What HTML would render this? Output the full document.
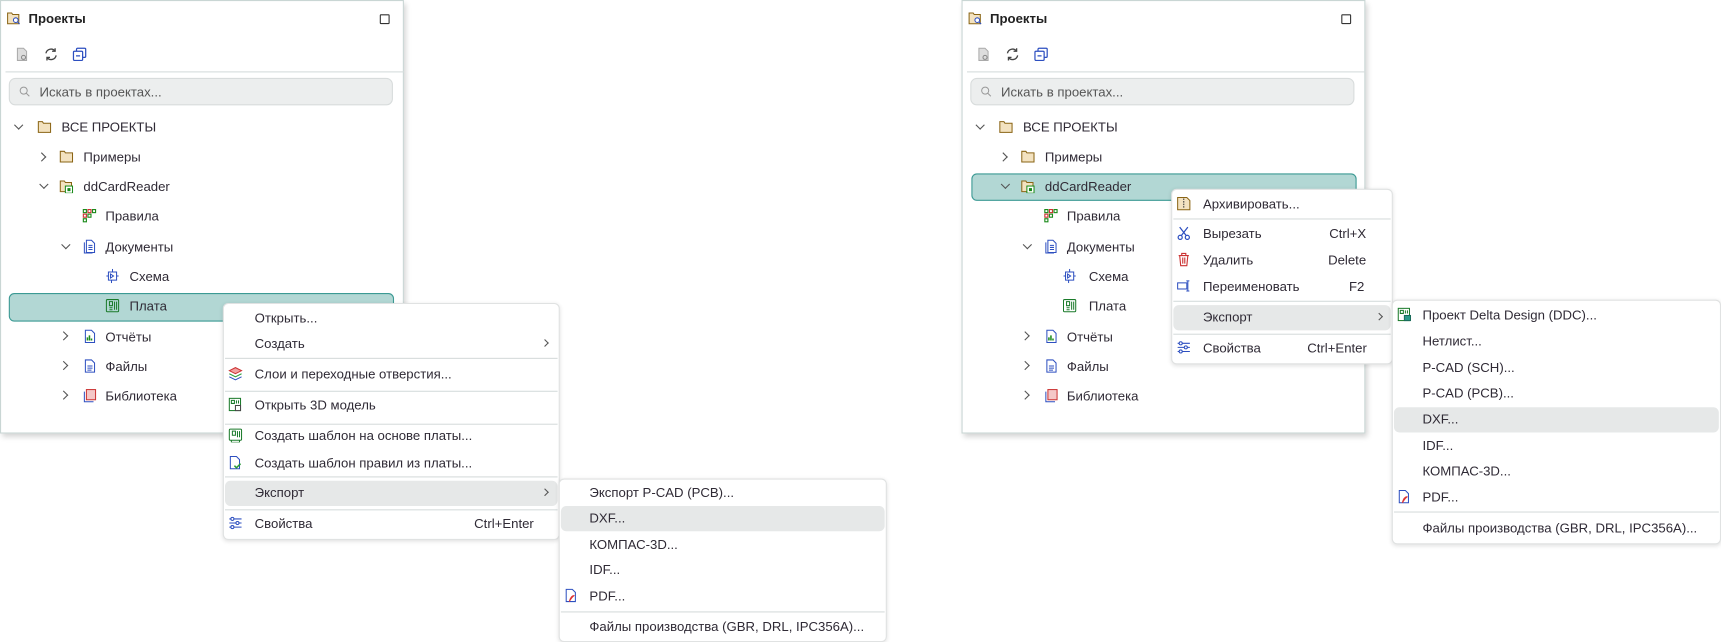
<!DOCTYPE html>
<html><head><meta charset="utf-8"><style>
*{box-sizing:border-box;margin:0;padding:0}
body{width:1721px;height:642px;background:#fff;position:relative;overflow:hidden;font-family:"Liberation Sans","DejaVu Sans",sans-serif;font-size:12px;color:#2f2a35}
#w{position:absolute;left:0;top:0;width:1568px;height:585px;transform:scale(1.0976);transform-origin:0 0}
.a{position:absolute;white-space:nowrap}
.panel{position:absolute;width:368px;height:395px;background:#fff;border:1px solid #c9d6d4;box-shadow:2px 3px 5px rgba(0,0,0,.18)}
.title{font-weight:bold;font-size:12px;color:#222}
.sq{width:9px;height:9px;border:1.3px solid #333;border-radius:1px}
.hr{position:absolute;height:1px;background:#d6dcdc}
.search{position:absolute;left:8px;top:71px;width:350px;height:25px;background:#eceeee;border:1px solid #d8dcdc;border-radius:6px}
.search span{position:absolute;left:27px;top:5px;color:#555}
.sel{position:absolute;background:#b2d7d4;border:1px solid #3c9a94;border-radius:5px}
.menu{position:absolute;background:#fff;border:1px solid #e0e2e2;border-radius:5px;box-shadow:0 1px 4px rgba(0,0,0,.12)}
.hl{position:absolute;background:#e6e8e8;border-radius:5px}
.chev{position:absolute;width:6px;height:6px;border-right:1.2px solid #555;border-bottom:1.2px solid #555}
.cr{transform:rotate(-45deg)}
.cd{transform:rotate(45deg)}
.ic{position:absolute;width:13px;height:13px}
</style></head><body><div id="w">

<!-- LEFT PANEL -->
<div class="panel" style="left:0;top:0"></div>
<svg class="ic" style="left:6px;top:10px" viewBox="0 0 14 14"><path d="M1 2h4l1 1.5h6v9H1z" fill="#f3e2c0" stroke="#8a6414"/><circle cx="9" cy="9" r="2.3" fill="#fff" stroke="#2d4fc0"/><path d="M10.6 10.6l2.2 2.2" stroke="#2d4fc0"/></svg>
<div class="a title" style="left:26px;top:10px">Проекты</div>
<div class="a sq" style="left:346px;top:13px"></div>
<svg class="ic" style="left:14px;top:43px" viewBox="0 0 14 14"><path d="M2 1h6l3 3v9H2z" fill="#ddd" stroke="#aaa"/><circle cx="8" cy="10" r="2" fill="none" stroke="#888"/></svg>
<svg class="ic" style="left:40px;top:43px" viewBox="0 0 14 14" fill="none" stroke="#444" stroke-width="1.3"><path d="M2 6a5 5 0 0 1 9-2M12 8a5 5 0 0 1-9 2"/><path d="M11 1v3h-3M3 13v-3h3"/></svg>
<svg class="ic" style="left:66px;top:43px" viewBox="0 0 14 14" fill="none" stroke="#2d4fc0" stroke-width="1.2"><rect x="4" y="1" width="9" height="9" rx="1"/><rect x="1" y="4" width="9" height="9" rx="1" fill="#fff"/><path d="M3.5 8.5h4"/></svg>
<div class="hr" style="left:5px;top:65px;width:363px"></div>
<div class="search"><svg class="ic" style="left:8px;top:6px;width:11px;height:11px" viewBox="0 0 12 12" fill="none" stroke="#999"><circle cx="5" cy="5" r="3.5"/><path d="M7.6 7.6l3 3"/></svg><span>Искать в проектах...</span></div>

<div class="chev cd" style="left:14px;top:111px"></div>
<svg class="ic" style="left:34px;top:109px" viewBox="0 0 14 14"><path d="M1 2h4l1 1.5h7v9H1z" fill="#f3e2c0" stroke="#8a6414"/></svg>
<div class="a" style="left:56px;top:109px">ВСЕ ПРОЕКТЫ</div>
<div class="chev cr" style="left:35px;top:140px"></div>
<svg class="ic" style="left:54px;top:136px" viewBox="0 0 14 14"><path d="M1 2h4l1 1.5h7v9H1z" fill="#f3e2c0" stroke="#8a6414"/></svg>
<div class="a" style="left:76px;top:136px">Примеры</div>
<div class="chev cd" style="left:37px;top:165px"></div>
<svg class="ic" style="left:54px;top:163px" viewBox="0 0 14 14"><path d="M1 2h4l1 1.5h6v9H1z" fill="#f3e2c0" stroke="#8a6414"/><rect x="6" y="7" width="7" height="7" fill="#fff" stroke="#1a8a1a"/><rect x="8" y="9" width="3" height="3" fill="#1a8a1a"/></svg>
<div class="a" style="left:76px;top:163px">ddCardReader</div>
<svg class="ic" style="left:75px;top:190px" viewBox="0 0 14 14" fill="none" stroke-width="1.1"><rect x="1" y="1" width="3" height="3" stroke="#1a8a1a"/><rect x="5.5" y="1" width="3" height="3" stroke="#c33"/><rect x="10" y="1" width="3" height="3" stroke="#1a8a1a"/><rect x="1" y="5.5" width="3" height="3" stroke="#c33"/><rect x="5.5" y="5.5" width="3" height="3" stroke="#1a8a1a"/><rect x="1" y="10" width="3" height="3" stroke="#1a8a1a"/></svg>
<div class="a" style="left:96px;top:190px">Правила</div>
<div class="chev cd" style="left:57px;top:220px"></div>
<svg class="ic" style="left:75px;top:218px" viewBox="0 0 14 14" fill="none" stroke="#2d4fc0"><path d="M4 1h5l3 3v9H4z"/><path d="M2 3v10.5h8"/><path d="M6 6h4M6 8h4M6 10h4"/></svg>
<div class="a" style="left:96px;top:218px">Документы</div>
<svg class="ic" style="left:96px;top:245px" viewBox="0 0 14 14" fill="none" stroke="#2d4fc0"><path d="M3 3h8v8H3z"/><path d="M7 0v3M1 7h2M11 7h2M6 11v3M5 5l3 2-3 2z"/></svg>
<div class="a" style="left:118px;top:245px">Схема</div>
<div class="sel" style="left:8px;top:267px;width:351px;height:26px"></div>
<svg class="ic" style="left:96px;top:272px" viewBox="0 0 14 14" fill="none" stroke="#1a7a2a"><rect x="1" y="1" width="12" height="12" rx="1"/><path d="M4 3v4h3V3zM9 3v8M11 3v8M4 9h3M4 11h3"/></svg>
<div class="a" style="left:118px;top:272px">Плата</div>
<div class="chev cr" style="left:55px;top:303px"></div>
<svg class="ic" style="left:75px;top:300px" viewBox="0 0 14 14"><path d="M3 1h6l3 3v9H3z" fill="none" stroke="#2d4fc0"/><path d="M5 11V8M7 11V6M9 11V9" stroke="#1a8a1a" stroke-width="1.5"/></svg>
<div class="a" style="left:96px;top:300px">Отчёты</div>
<div class="chev cr" style="left:55px;top:330px"></div>
<svg class="ic" style="left:75px;top:327px" viewBox="0 0 14 14" fill="none" stroke="#2d4fc0"><path d="M3 1h6l3 3v9H3z"/><path d="M5 7h5M5 9h5M5 11h4"/></svg>
<div class="a" style="left:96px;top:327px">Файлы</div>
<div class="chev cr" style="left:55px;top:357px"></div>
<svg class="ic" style="left:75px;top:354px" viewBox="0 0 14 14"><rect x="4" y="1" width="9" height="10" fill="#f4c7c7" stroke="#c33"/><path d="M2 3v10h9" fill="none" stroke="#2d4fc0"/></svg>
<div class="a" style="left:96px;top:354px">Библиотека</div>

<!-- LEFT MENU -->
<div class="menu" style="left:203px;top:276px;width:307px;height:216px"></div>
<div class="a" style="left:232px;top:283px">Открыть...</div>
<div class="a" style="left:232px;top:306px">Создать</div>
<div class="chev cr" style="left:494px;top:310px;width:5px;height:5px"></div>
<div class="hr" style="left:205px;top:326px;width:303px"></div>
<svg class="ic" style="left:208px;top:334px" viewBox="0 0 14 14"><path d="M1 4l6-3 6 3-6 3z" fill="#f2a0a0" stroke="#c33"/><path d="M1 7l6 3 6-3" fill="none" stroke="#2a9a3a"/><path d="M1 10l6 3 6-3" fill="none" stroke="#2d4fc0"/></svg>
<div class="a" style="left:232px;top:334px">Слои и переходные отверстия...</div>
<div class="hr" style="left:205px;top:356px;width:303px"></div>
<svg class="ic" style="left:208px;top:362px" viewBox="0 0 14 14" fill="none" stroke="#1a7a2a"><rect x="1" y="1" width="11" height="12"/><path d="M3 3h3v3H3zM8 3v3M10 3v3"/><rect x="7" y="8" width="5" height="5" fill="#fff" stroke="#444"/></svg>
<div class="a" style="left:232px;top:362px">Открыть 3D модель</div>
<div class="hr" style="left:205px;top:386px;width:303px"></div>
<svg class="ic" style="left:208px;top:390px" viewBox="0 0 14 14" fill="none" stroke="#1a7a2a"><rect x="1" y="1" width="12" height="11" rx="1"/><path d="M4 3v4h3V3zM9 3v6M11 3v6M3 12v2h8v-2"/></svg>
<div class="a" style="left:232px;top:390px">Создать шаблон на основе платы...</div>
<svg class="ic" style="left:208px;top:415px" viewBox="0 0 14 14" fill="none"><path d="M2 1h6l3 3v9H2z" stroke="#2d4fc0"/><path d="M6 10l2 2 4-4" stroke="#2a9a3a" stroke-width="1.5"/></svg>
<div class="a" style="left:232px;top:415px">Создать шаблон правил из платы...</div>
<div class="hr" style="left:205px;top:434px;width:303px"></div>
<div class="hl" style="left:205px;top:438px;width:303px;height:23px"></div>
<div class="a" style="left:232px;top:442px">Экспорт</div>
<div class="chev cr" style="left:494px;top:446px;width:5px;height:5px"></div>
<div class="hr" style="left:205px;top:464px;width:303px"></div>
<svg class="ic" style="left:208px;top:470px" viewBox="0 0 14 14" fill="none" stroke="#2d4fc0"><path d="M1 3h12M1 7h12M1 11h12"/><circle cx="4" cy="3" r="1.5" fill="#fff"/><circle cx="9" cy="7" r="1.5" fill="#fff"/><circle cx="4" cy="11" r="1.5" fill="#fff"/></svg>
<div class="a" style="left:232px;top:470px">Свойства</div>
<div class="a" style="left:432px;top:470px">Ctrl+Enter</div>

<!-- LEFT SUBMENU -->
<div class="menu" style="left:509px;top:436px;width:299px;height:149px"></div>
<div class="a" style="left:537px;top:442px">Экспорт P-CAD (PCB)...</div>
<div class="hl" style="left:511px;top:461px;width:295px;height:23px"></div>
<div class="a" style="left:537px;top:465px">DXF...</div>
<div class="a" style="left:537px;top:489px">КОМПАС-3D...</div>
<div class="a" style="left:537px;top:512px">IDF...</div>
<svg class="ic" style="left:514px;top:536px" viewBox="0 0 14 14" fill="none"><path d="M2 1h6l3 3v9H2z" stroke="#2d4fc0"/><path d="M5 13c1-4 3-6 5-6-2 1-3 3-5 6z" stroke="#d33"/></svg>
<div class="a" style="left:537px;top:536px">PDF...</div>
<div class="hr" style="left:511px;top:557px;width:295px"></div>
<div class="a" style="left:537px;top:564px">Файлы производства (GBR, DRL, IPC356A)...</div>

<!-- RIGHT PANEL -->
<div class="panel" style="left:876px;top:0"></div>
<svg class="ic" style="left:882px;top:10px" viewBox="0 0 14 14"><path d="M1 2h4l1 1.5h6v9H1z" fill="#f3e2c0" stroke="#8a6414"/><circle cx="9" cy="9" r="2.3" fill="#fff" stroke="#2d4fc0"/><path d="M10.6 10.6l2.2 2.2" stroke="#2d4fc0"/></svg>
<div class="a title" style="left:902px;top:10px">Проекты</div>
<div class="a sq" style="left:1222px;top:13px"></div>
<svg class="ic" style="left:890px;top:43px" viewBox="0 0 14 14"><path d="M2 1h6l3 3v9H2z" fill="#ddd" stroke="#aaa"/><circle cx="8" cy="10" r="2" fill="none" stroke="#888"/></svg>
<svg class="ic" style="left:916px;top:43px" viewBox="0 0 14 14" fill="none" stroke="#444" stroke-width="1.3"><path d="M2 6a5 5 0 0 1 9-2M12 8a5 5 0 0 1-9 2"/><path d="M11 1v3h-3M3 13v-3h3"/></svg>
<svg class="ic" style="left:942px;top:43px" viewBox="0 0 14 14" fill="none" stroke="#2d4fc0" stroke-width="1.2"><rect x="4" y="1" width="9" height="9" rx="1"/><rect x="1" y="4" width="9" height="9" rx="1" fill="#fff"/><path d="M3.5 8.5h4"/></svg>
<div class="hr" style="left:881px;top:65px;width:363px"></div>
<div class="search" style="left:884px"><svg class="ic" style="left:8px;top:6px;width:11px;height:11px" viewBox="0 0 12 12" fill="none" stroke="#999"><circle cx="5" cy="5" r="3.5"/><path d="M7.6 7.6l3 3"/></svg><span>Искать в проектах...</span></div>

<div class="chev cd" style="left:890px;top:111px"></div>
<svg class="ic" style="left:910px;top:109px" viewBox="0 0 14 14"><path d="M1 2h4l1 1.5h7v9H1z" fill="#f3e2c0" stroke="#8a6414"/></svg>
<div class="a" style="left:932px;top:109px">ВСЕ ПРОЕКТЫ</div>
<div class="chev cr" style="left:911px;top:140px"></div>
<svg class="ic" style="left:930px;top:136px" viewBox="0 0 14 14"><path d="M1 2h4l1 1.5h7v9H1z" fill="#f3e2c0" stroke="#8a6414"/></svg>
<div class="a" style="left:952px;top:136px">Примеры</div>
<div class="sel" style="left:885px;top:158px;width:351px;height:25px"></div>
<div class="chev cd" style="left:913px;top:165px"></div>
<svg class="ic" style="left:930px;top:163px" viewBox="0 0 14 14"><path d="M1 2h4l1 1.5h6v9H1z" fill="#f3e2c0" stroke="#8a6414"/><rect x="6" y="7" width="7" height="7" fill="#fff" stroke="#1a8a1a"/><rect x="8" y="9" width="3" height="3" fill="#1a8a1a"/></svg>
<div class="a" style="left:952px;top:163px">ddCardReader</div>
<svg class="ic" style="left:951px;top:190px" viewBox="0 0 14 14" fill="none" stroke-width="1.1"><rect x="1" y="1" width="3" height="3" stroke="#1a8a1a"/><rect x="5.5" y="1" width="3" height="3" stroke="#c33"/><rect x="10" y="1" width="3" height="3" stroke="#1a8a1a"/><rect x="1" y="5.5" width="3" height="3" stroke="#c33"/><rect x="5.5" y="5.5" width="3" height="3" stroke="#1a8a1a"/><rect x="1" y="10" width="3" height="3" stroke="#1a8a1a"/></svg>
<div class="a" style="left:972px;top:190px">Правила</div>
<div class="chev cd" style="left:933px;top:220px"></div>
<svg class="ic" style="left:951px;top:218px" viewBox="0 0 14 14" fill="none" stroke="#2d4fc0"><path d="M4 1h5l3 3v9H4z"/><path d="M2 3v10.5h8"/><path d="M6 6h4M6 8h4M6 10h4"/></svg>
<div class="a" style="left:972px;top:218px">Документы</div>
<svg class="ic" style="left:968px;top:245px" viewBox="0 0 14 14" fill="none" stroke="#2d4fc0"><path d="M3 3h8v8H3z"/><path d="M7 0v3M1 7h2M11 7h2M6 11v3M5 5l3 2-3 2z"/></svg>
<div class="a" style="left:992px;top:245px">Схема</div>
<svg class="ic" style="left:968px;top:272px" viewBox="0 0 14 14" fill="none" stroke="#1a7a2a"><rect x="1" y="1" width="12" height="12" rx="1"/><path d="M4 3v4h3V3zM9 3v8M11 3v8M4 9h3M4 11h3"/></svg>
<div class="a" style="left:992px;top:272px">Плата</div>
<div class="chev cr" style="left:931px;top:303px"></div>
<svg class="ic" style="left:951px;top:300px" viewBox="0 0 14 14"><path d="M3 1h6l3 3v9H3z" fill="none" stroke="#2d4fc0"/><path d="M5 11V8M7 11V6M9 11V9" stroke="#1a8a1a" stroke-width="1.5"/></svg>
<div class="a" style="left:972px;top:300px">Отчёты</div>
<div class="chev cr" style="left:931px;top:330px"></div>
<svg class="ic" style="left:951px;top:327px" viewBox="0 0 14 14" fill="none" stroke="#2d4fc0"><path d="M3 1h6l3 3v9H3z"/><path d="M5 7h5M5 9h5M5 11h4"/></svg>
<div class="a" style="left:972px;top:327px">Файлы</div>
<div class="chev cr" style="left:931px;top:357px"></div>
<svg class="ic" style="left:951px;top:354px" viewBox="0 0 14 14"><rect x="4" y="1" width="9" height="10" fill="#f4c7c7" stroke="#c33"/><path d="M2 3v10h9" fill="none" stroke="#2d4fc0"/></svg>
<div class="a" style="left:972px;top:354px">Библиотека</div>

<!-- RIGHT MENU -->
<div class="menu" style="left:1067px;top:172px;width:202px;height:160px"></div>
<svg class="ic" style="left:1072px;top:179px" viewBox="0 0 14 14" fill="none"><path d="M1 1h9l3 3v9H1z" fill="#f3e2c0" stroke="#8a6414"/><path d="M7 2v10" stroke="#333" stroke-dasharray="1.5 1"/></svg>
<div class="a" style="left:1096px;top:179px">Архивировать...</div>
<div class="hr" style="left:1069px;top:199px;width:198px"></div>
<svg class="ic" style="left:1072px;top:206px" viewBox="0 0 14 14" fill="none" stroke="#2d4fc0" stroke-width="1.2"><circle cx="3.5" cy="11" r="2"/><circle cx="10.5" cy="11" r="2"/><path d="M4.5 9.5L11 1M9.5 9.5L3 1"/></svg>
<div class="a" style="left:1096px;top:206px">Вырезать</div>
<div class="a" style="left:1211px;top:206px">Ctrl+X</div>
<svg class="ic" style="left:1072px;top:230px" viewBox="0 0 14 14" fill="none" stroke="#c33" stroke-width="1.1"><path d="M2 3h10M5 3V1h4v2M3 3l1 10h6l1-10M6 5v6M8 5v6"/></svg>
<div class="a" style="left:1096px;top:230px">Удалить</div>
<div class="a" style="left:1210px;top:230px">Delete</div>
<svg class="ic" style="left:1072px;top:254px" viewBox="0 0 14 14" fill="none" stroke="#2d4fc0"><rect x="1" y="4" width="9" height="6"/><path d="M11 2v10M9.5 2h3M9.5 12h3"/></svg>
<div class="a" style="left:1096px;top:254px">Переименовать</div>
<div class="a" style="left:1229px;top:254px">F2</div>
<div class="hr" style="left:1069px;top:274px;width:198px"></div>
<div class="hl" style="left:1069px;top:278px;width:198px;height:23px"></div>
<div class="a" style="left:1096px;top:282px">Экспорт</div>
<div class="chev cr" style="left:1254px;top:286px;width:5px;height:5px"></div>
<div class="hr" style="left:1069px;top:304px;width:198px"></div>
<svg class="ic" style="left:1072px;top:310px" viewBox="0 0 14 14" fill="none" stroke="#2d4fc0"><path d="M1 3h12M1 7h12M1 11h12"/><circle cx="4" cy="3" r="1.5" fill="#fff"/><circle cx="9" cy="7" r="1.5" fill="#fff"/><circle cx="4" cy="11" r="1.5" fill="#fff"/></svg>
<div class="a" style="left:1096px;top:310px">Свойства</div>
<div class="a" style="left:1191px;top:310px">Ctrl+Enter</div>

<!-- RIGHT SUBMENU -->
<div class="menu" style="left:1268px;top:273px;width:300px;height:223px"></div>
<svg class="ic" style="left:1273px;top:280px" viewBox="0 0 14 14" fill="none" stroke="#1a7a2a"><rect x="1" y="1" width="11" height="12"/><path d="M3 3h3v3H3zM8 3v3M10 3v3"/><rect x="7" y="8" width="6" height="5" fill="#2a9a8a" stroke="#1a6a5a"/></svg>
<div class="a" style="left:1296px;top:280px">Проект Delta Design (DDC)...</div>
<div class="a" style="left:1296px;top:304px">Нетлист...</div>
<div class="a" style="left:1296px;top:328px">P-CAD (SCH)...</div>
<div class="a" style="left:1296px;top:351px">P-CAD (PCB)...</div>
<div class="hl" style="left:1270px;top:371px;width:296px;height:23px"></div>
<div class="a" style="left:1296px;top:375px">DXF...</div>
<div class="a" style="left:1296px;top:399px">IDF...</div>
<div class="a" style="left:1296px;top:422px">КОМПАС-3D...</div>
<svg class="ic" style="left:1273px;top:446px" viewBox="0 0 14 14" fill="none"><path d="M2 1h6l3 3v9H2z" stroke="#2d4fc0"/><path d="M5 13c1-4 3-6 5-6-2 1-3 3-5 6z" stroke="#d33"/></svg>
<div class="a" style="left:1296px;top:446px">PDF...</div>
<div class="hr" style="left:1270px;top:466px;width:296px"></div>
<div class="a" style="left:1296px;top:474px">Файлы производства (GBR, DRL, IPC356A)...</div>

</div></body></html>
